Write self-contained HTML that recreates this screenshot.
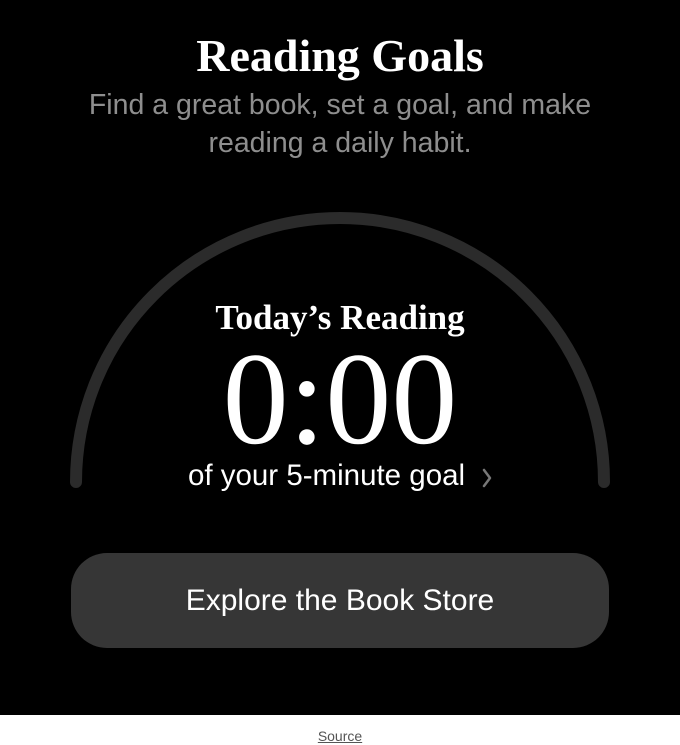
<!DOCTYPE html>
<html><head><style>
body{margin:0;width:680px;height:745px;background:#fff;overflow:hidden;font-family:"Liberation Sans",sans-serif}
.top{position:absolute;left:0;top:0;width:680px;height:715px;background:#000}
.t{position:absolute;left:0;width:680px;text-align:center;white-space:nowrap}
</style></head><body>
<div class="top">
<svg width="680" height="715" style="position:absolute;left:0;top:0">
<path d="M76 482 A264 264 0 0 1 604 482" fill="none" stroke="#2b2b2b" stroke-width="12" stroke-linecap="round"/>
<path d="M484 470 L490 478 L484 486" fill="none" stroke="#777" stroke-width="2.5" stroke-linecap="round" stroke-linejoin="round"/>
</svg>
<div class="t" style="top:29px;font:bold 46px 'Liberation Serif',serif;color:#fff">Reading Goals</div>
<div class="t" style="top:86px;font-size:28.5px;line-height:38px;color:#8e8e8e">Find a great book, set a goal, and make<br>reading a daily habit.</div>
<div class="t" style="top:298px;font:bold 35px 'Liberation Serif',serif;color:#fff">Today’s Reading</div>
<div class="t" style="top:333px;font:132px 'Liberation Serif',serif;color:#fff;line-height:132px">0:00</div>
<div class="t" style="top:459px;font-size:29.5px;color:#fff;padding-right:27px;box-sizing:border-box">of your 5-minute goal</div>
<div style="position:absolute;left:71px;top:553px;width:538px;height:95px;border-radius:36px;background:#363636;color:#fff;font-size:30px;line-height:95px;text-align:center">Explore the Book Store</div>
</div>
<div class="t" style="top:728px;font-size:14px;color:#555;text-decoration:underline">Source</div>
</body></html>
